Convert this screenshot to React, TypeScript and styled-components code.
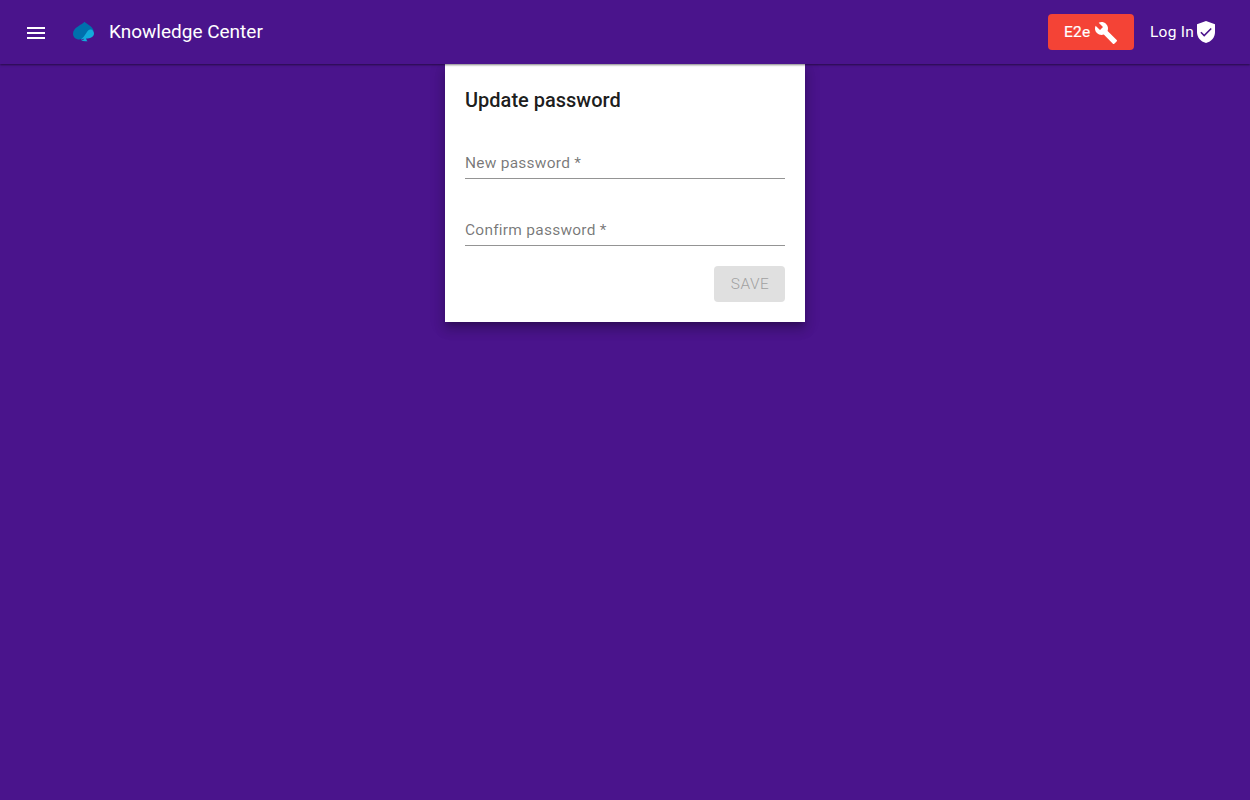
import React from 'react';
import styled, { createGlobalStyle } from 'styled-components';

const GlobalStyle = createGlobalStyle`
  *, *::before, *::after { box-sizing: border-box; }
  body {
    margin: 0;
    min-height: 100vh;
    background: #4a148c;
    font-family: Roboto, "Liberation Sans", sans-serif;
    font-size: 16px;
  }
`;

const Header = styled.header`
  position: relative;
  z-index: 1;
  display: flex;
  align-items: center;
  height: 64px;
  padding: 0 32px 0 24px;
  background: #4a148c;
  color: #fff;
  box-shadow: 0 1px 2px rgba(0, 0, 0, 0.5);
`;

const MenuButton = styled.button`
  display: flex;
  padding: 0;
  margin: 2px 24px 0 0;
  border: 0;
  background: none;
  color: inherit;
`;

const Brand = styled.div`
  display: flex;
  align-items: center;
  flex: 1;
  gap: 14px;
`;

const BrandName = styled.h1`
  margin: 0;
  font-size: 19px;
  line-height: 24px;
  font-weight: 400;
`;

const EnvironmentButton = styled.button`
  display: flex;
  align-items: center;
  justify-content: space-between;
  width: 86px;
  height: 36px;
  padding: 0 16px;
  border: 0;
  border-radius: 4px;
  background: #f44336;
  color: #fff;
  font: 400 15.49px/36px Roboto, sans-serif;
  letter-spacing: 0.25px;
  -webkit-text-stroke: 0.2px currentColor;
  white-space: nowrap;

  svg {
    margin: 2px 0 0;
  }
`;

const LoginLink = styled.a`
  display: flex;
  align-items: center;
  margin-left: 16px;
  width: 68px;
  justify-content: space-between;
  font-size: 15.49px;
  line-height: 24px;
  letter-spacing: 0.25px;
  white-space: nowrap;
`;

const Icon = styled.svg`
  display: block;
  flex: none;
  fill: currentColor;
`;

const Main = styled.main`
  display: flex;
  justify-content: center;
`;

const Card = styled.form`
  display: flex;
  flex-direction: column;
  width: 360px;
  height: 258px;
  padding: 20px;
  background: #fff;
  box-shadow: 0 5px 5px -3px rgba(0, 0, 0, 0.2), 0 8px 10px 1px rgba(0, 0, 0, 0.14),
    0 3px 14px 2px rgba(0, 0, 0, 0.12);
`;

const Title = styled.h2`
  margin: 0 0 16px;
  color: rgba(0, 0, 0, 0.9);
  font-size: 20px;
  line-height: 32px;
  font-weight: 500;
`;

const Field = styled.label`
  display: block;
  height: 47px;
  margin-bottom: 20px;
  padding-top: 21px;
  border-bottom: 1px solid #949494;
  color: rgba(0, 0, 0, 0.54);
  font-size: 15.49px;
  line-height: 20px;
  letter-spacing: 0.25px;
`;

const SaveButton = styled.button`
  align-self: flex-end;
  width: 71px;
  height: 36px;
  padding: 0 0 0 1px;
  border: 0;
  border-radius: 4px;
  background: #e0e0e0;
  color: #a0a0a0;
  font: 300 15.4px/36px Roboto, sans-serif;
  letter-spacing: 0.5px;
`;

export default function App() {
  return (
    <>
      <GlobalStyle />
      <Header>
        <MenuButton type="button" aria-label="Menu">
          <Icon width="24" height="24" viewBox="0 0 24 24">
            <path d="M3 18h18v-2H3v2zm0-5h18v-2H3v2zm0-7v2h18V6H3z" />
          </Icon>
        </MenuButton>
        <Brand>
          <Icon width="23" height="22" viewBox="0 0 23 22">
            <path
              fill="#0070ad"
              d="M12.600 .8C10.500 3.500 1 6.500 1 12.700c0 3.300 2.800 5.800 6.200 5.800 3.300 0 6-1.800 8.300-4.900 1.600-2.200 3.500-4.600 6.200-3.800C20.500 5.300 14.800 3.400 12.600.8z"
            />
            <path
              fill="#12abdb"
              d="M22 12.600c0-2.200-1.300-4-3.400-4-4 0-4.600 6.800-9.800 9.600 1.400.4 2.500.1 3.400-.6-.4 1.100-1.200 1.700-2.600 1.900v.6c2.400-.2 3.800.2 6 .2-.8-.8-1.300-1.700-1.300-3 3.500.8 7.700-1.200 7.700-4.700z"
            />
          </Icon>
          <BrandName>Knowledge Center</BrandName>
        </Brand>
        <EnvironmentButton type="button">
          <span>E2e</span>
          <Icon width="24" height="24" viewBox="0 0 24 24">
            <path d="M22.700 19l-9.100-9.100c.9-2.300.4-5-1.500-6.900-2-2-5-2.400-7.400-1.300L9 6 6 9 1.600 4.700C.4 7.100.9 10.100 2.900 12.100c1.900 1.900 4.600 2.400 6.900 1.500l9.100 9.100c.4.4 1 .4 1.400 0l2.300-2.300c.5-.4.5-1.100.1-1.400z" />
          </Icon>
        </EnvironmentButton>
        <LoginLink>
          <span>Log In</span>
          <Icon width="24" height="24" viewBox="0 0 24 24">
            <path d="M12 1L3 4.300V12c0 5.300 3.500 9.600 9 11 5.500-1.400 9-5.700 9-11V4.300L12 1z" />
            <path d="M6.900 12.200l3.300 3.300 7-7" fill="none" stroke="#4a148c" strokeWidth="1.600" />
          </Icon>
        </LoginLink>
      </Header>
      <Main>
        <Card>
          <Title>Update password</Title>
          <Field>New password *</Field>
          <Field>Confirm password *</Field>
          <SaveButton type="button" disabled>
            SAVE
          </SaveButton>
        </Card>
      </Main>
    </>
  );
}
